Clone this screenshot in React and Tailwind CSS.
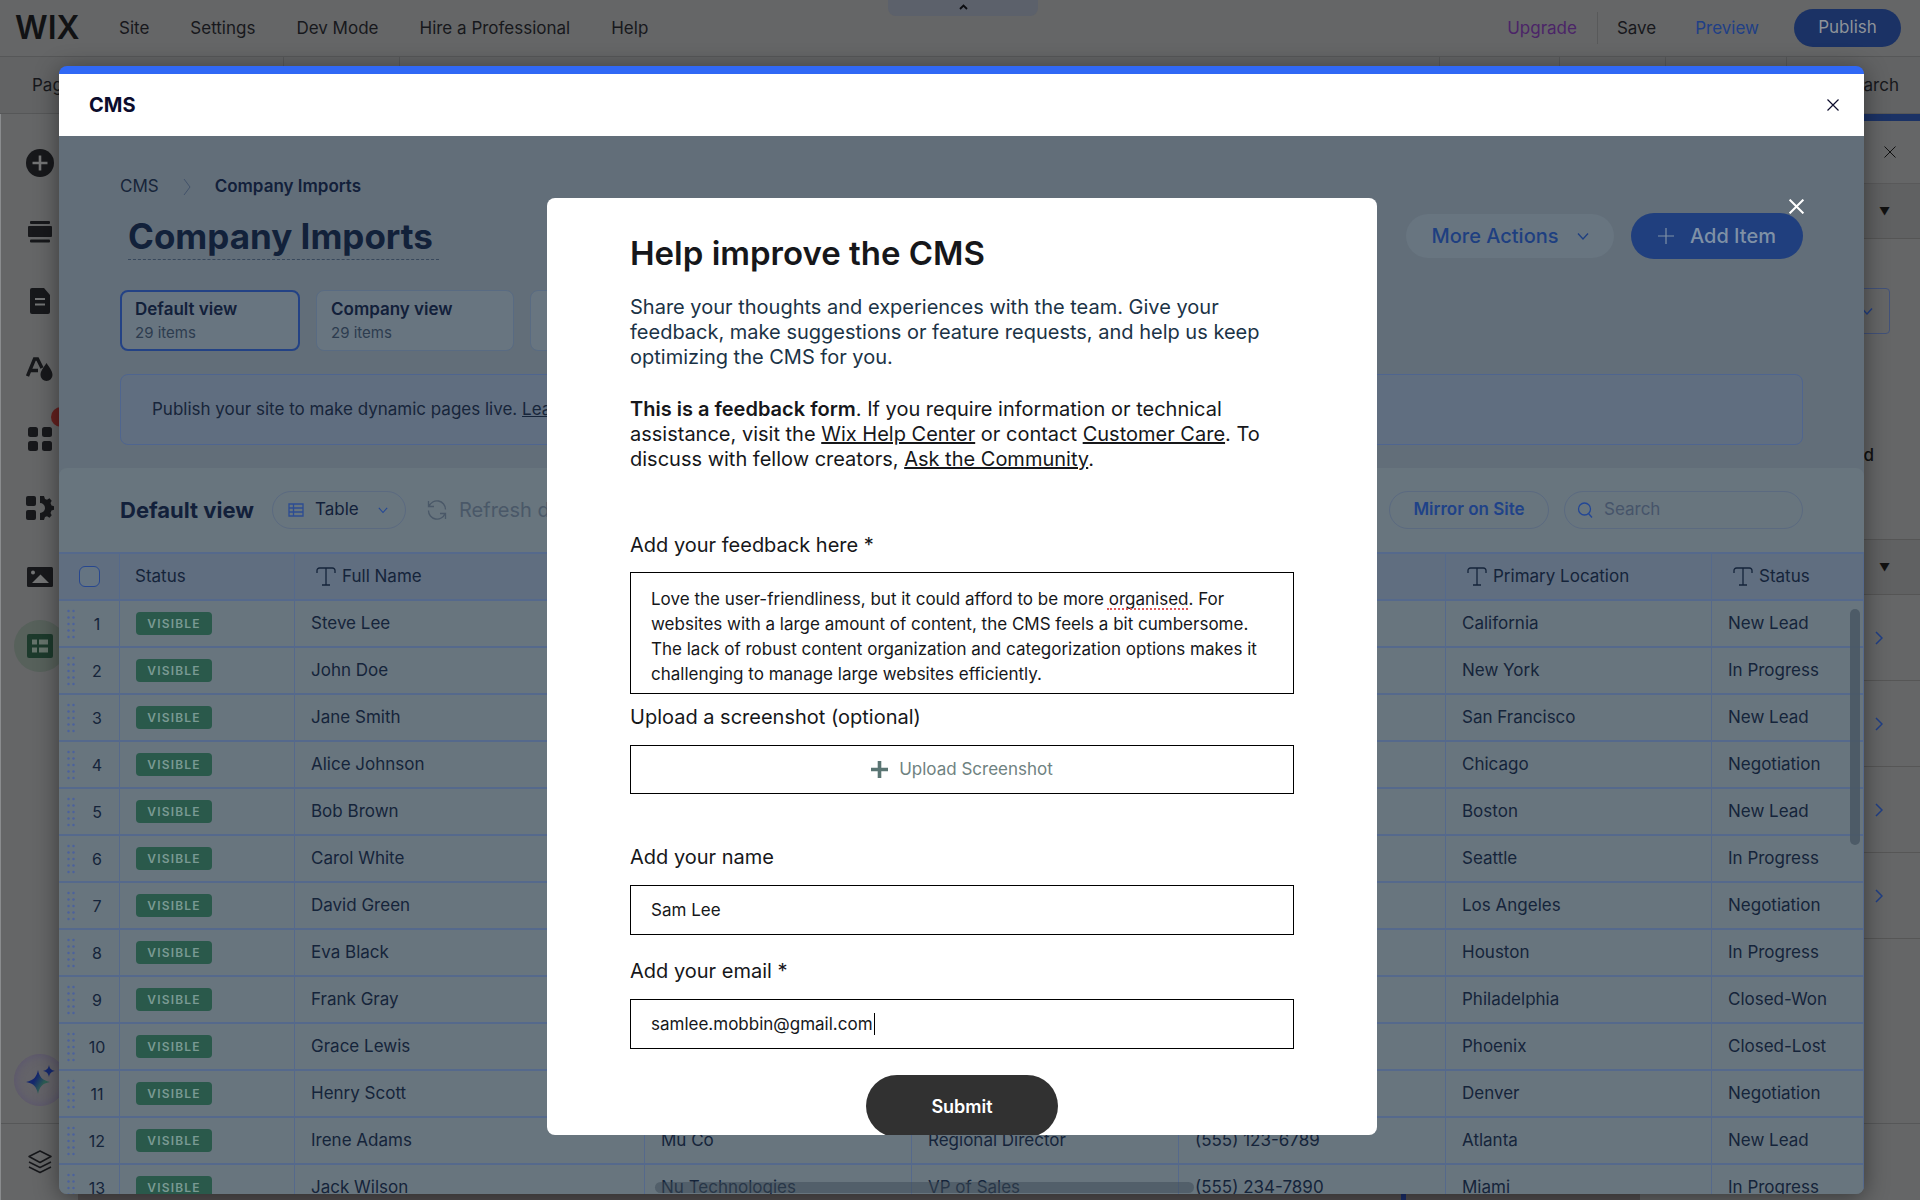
import React from 'react';

const menu = ['Site', 'Settings', 'Dev Mode', 'Hire a Professional', 'Help'];

const rows = [
  { name: 'Steve Lee', location: 'California', status: 'New Lead' },
  { name: 'John Doe', location: 'New York', status: 'In Progress' },
  { name: 'Jane Smith', location: 'San Francisco', status: 'New Lead' },
  { name: 'Alice Johnson', location: 'Chicago', status: 'Negotiation' },
  { name: 'Bob Brown', location: 'Boston', status: 'New Lead' },
  { name: 'Carol White', location: 'Seattle', status: 'In Progress' },
  { name: 'David Green', location: 'Los Angeles', status: 'Negotiation' },
  { name: 'Eva Black', location: 'Houston', status: 'In Progress' },
  { name: 'Frank Gray', location: 'Philadelphia', status: 'Closed-Won' },
  { name: 'Grace Lewis', location: 'Phoenix', status: 'Closed-Lost' },
  { name: 'Henry Scott', location: 'Denver', status: 'Negotiation' },
  { name: 'Irene Adams', company: 'Mu Co', title: 'Regional Director', phone: '(555) 123-6789', location: 'Atlanta', status: 'New Lead' },
  { name: 'Jack Wilson', company: 'Nu Technologies', title: 'VP of Sales', phone: '(555) 234-7890', location: 'Miami', status: 'In Progress' },
];

const feedback =
  'Love the user-friendliness, but it could afford to be more organised. For websites with a large amount of content, the CMS feels a bit cumbersome. The lack of robust content organization and categorization options makes it challenging to manage large websites efficiently.';

/* ---------- Icons ---------- */

function Cross({ size, width = 1.5 }) {
  return (
    <svg width={size} height={size} viewBox="0 0 12 12" fill="none" stroke="currentColor" strokeWidth={width}>
      <path d="M0.5 0.5 11.5 11.5M11.5 0.5 0.5 11.5" />
    </svg>
  );
}

function ChevronDown({ size = 12 }) {
  return (
    <svg width={size} height={size} viewBox="0 0 12 12" fill="none" stroke="currentColor" strokeWidth="1.3">
      <path d="M1 3.5 6 9l5-5.5" />
    </svg>
  );
}

function ChevronRight() {
  return (
    <svg width="8" height="14" viewBox="0 0 8 14" fill="none" stroke="currentColor" strokeWidth="1.5">
      <path d="M1 1l6 6-6 6" />
    </svg>
  );
}

function TextIcon() {
  return (
    <svg width="20" height="19" viewBox="0 0 20 19" fill="none" stroke="currentColor" strokeWidth="1.3">
      <path d="M1 6V3.5A2.5 2.5 0 0 1 3.5 1h13A2.5 2.5 0 0 1 19 3.5V6M10 1v17M6 18h8" />
    </svg>
  );
}

function DragDots() {
  return (
    <svg width="8" height="30" viewBox="0 0 8 30" fill="#4c629c">
      {[2, 8.5, 15, 21.5, 28].map((y) => (
        <g key={y}>
          <circle cx="1.5" cy={y} r="1.2" />
          <circle cx="6.5" cy={y} r="1.2" />
        </g>
      ))}
    </svg>
  );
}

const sideIcons = [
  {
    label: 'Add',
    icon: (
      <svg width="28" height="28" viewBox="0 0 28 28">
        <circle cx="14" cy="14" r="14" fill="currentColor" />
        <path d="M14 6.5v15M6.5 14h15" stroke="#737475" strokeWidth="2.6" />
      </svg>
    ),
  },
  {
    label: 'Sections',
    icon: (
      <svg width="24" height="22" viewBox="0 0 24 22" fill="currentColor">
        <rect x="2" y="0" width="20" height="3" rx="1" />
        <rect x="0" y="5" width="24" height="11" rx="1" />
        <rect x="2" y="18.5" width="20" height="3" rx="1" />
      </svg>
    ),
  },
  {
    label: 'Pages',
    icon: (
      <svg width="20" height="26" viewBox="0 0 20 26">
        <path d="M2 0h12l6 7v17a2 2 0 0 1-2 2H2a2 2 0 0 1-2-2V2a2 2 0 0 1 2-2z" fill="currentColor" />
        <path d="M5 11h10M5 16.5h10" stroke="#737475" strokeWidth="2.2" />
      </svg>
    ),
  },
  {
    label: 'Design',
    icon: (
      <svg width="28" height="26" viewBox="0 0 28 26">
        <path d="M1.5 19 8.5 2h3l4.5 9M5 13.5h7" fill="none" stroke="currentColor" strokeWidth="3.4" />
        <path d="M20.500 6c3 4.500 6 8 6 12a6 6 0 0 1-12 0c0-4 3-7.500 6-12z" fill="currentColor" />
      </svg>
    ),
  },
  {
    label: 'Apps',
    icon: (
      <svg width="24" height="24" viewBox="0 0 24 24" fill="currentColor">
        <rect x="0" y="0" width="10" height="10" rx="2.5" />
        <rect x="14" y="0" width="10" height="10" rx="2.5" />
        <rect x="0" y="14" width="10" height="10" rx="2.5" />
        <rect x="14" y="14" width="10" height="10" rx="2.5" />
      </svg>
    ),
  },
  {
    label: 'Business',
    icon: (
      <svg width="28" height="24" viewBox="0 0 28 24" fill="currentColor">
        <rect x="0" y="0" width="10" height="10" rx="2" />
        <rect x="0" y="14" width="10" height="10" rx="2" />
        <path d="M14 0h4l1 3 2 .8 2.5-1.5 2.2 2.4L24.5 7l1 2.5 2.500.7v3.600l-2.500.7-1 2.500 1.200 2.300-2.200 2.400-2.500-1.500-2 .8-1 3h-4v-7a5 5 0 0 0 0-10z" />
      </svg>
    ),
  },
  {
    label: 'Media',
    icon: (
      <svg width="26" height="20" viewBox="0 0 26 20">
        <rect width="26" height="20" rx="1.5" fill="currentColor" />
        <circle cx="6" cy="5.5" r="2" fill="#737475" />
        <path d="M5 16l8.5-8.5L22 16z" fill="#737475" />
      </svg>
    ),
  },
  {
    label: 'CMS',
    active: true,
    icon: (
      <svg width="26" height="24" viewBox="0 0 26 24">
        <rect width="26" height="24" rx="2" fill="#1d3a2c" />
        <path d="M5 5.500h5v5H5zM12 5.500h9v5h-9zM5 13.500h5v5H5zM12 13.500h9v5h-9z" fill="#66736b" />
      </svg>
    ),
  },
];

/* ---------- Editor behind the windows ---------- */

function TopBar() {
  return (
    <header className="relative flex h-[57px] items-center border-b border-[#565758] bg-[#656667] pl-[15px] pr-[19px] text-[17px] text-[#17181c]">
      <span className="w-[104px] text-[32px] font-semibold leading-none text-[#111214]">WIX</span>
      <nav className="flex flex-1 gap-[41px] pt-0.5">
        {menu.map((item) => (
          <button key={item} type="button">{item}</button>
        ))}
      </nav>
      <button type="button" className="absolute left-1/2 top-0 flex h-4 w-[150px] -translate-x-[72px] justify-center rounded-b-lg bg-[#5c616b]" aria-label="Collapse">
        <svg width="9" height="6" viewBox="0 0 9 6" className="mt-1" fill="none" stroke="#0b0c10" strokeWidth="1.8">
          <path d="M1 5l3.5-3.5L8 5" />
        </svg>
      </button>
      <button type="button" className="pt-0.5 text-[#4b2468]">Upgrade</button>
      <span className="ml-5 mr-[19px] h-8 w-px bg-[#58595a]" />
      <button type="button" className="pt-0.5">Save</button>
      <button type="button" className="ml-[39px] pt-0.5 text-[#203f86]">Preview</button>
      <button type="button" className="ml-[35px] h-[38px] w-[107px] rounded-full bg-[#1b3265] text-[#8e9399]">Publish</button>
    </header>
  );
}

function SubBar() {
  return (
    <div className="flex h-[57px] items-center border-b border-[#565758] bg-[#626364] text-[17px] text-[#17181c] [&>div]:flex [&>div]:h-full [&>div]:items-center [&>div]:border-r [&>div]:border-[#565758]">
      <div className="w-[284px] pl-8 pt-0.5">Page</div>
      <div className="w-[116px]" />
      <div className="flex-1" />
      <div className="w-[120px]" />
      <div className="w-[106px]" />
      <div className="w-[121px]" />
      <button type="button" className="w-[133px] pr-[21px] pt-0.5 text-right">Search</button>
    </div>
  );
}

function LeftRail() {
  return (
    <aside className="flex w-[78px] flex-col border-l border-[#8a8c8e] bg-[#656667] text-[#17181b]">
      <div className="flex-1 pt-3.5">
        {sideIcons.map(({ label, icon, active }) => (
          <div key={label} className="relative flex h-[69px] items-center justify-center">
            {label === 'Apps' && (
              <span className="absolute left-[50px] top-[3px] h-5 w-5 rounded-full bg-[#66211f]" />
            )}
            <button
              type="button"
              aria-label={label}
              className={active ? 'flex h-[52px] w-[52px] items-center justify-center rounded-full bg-[#57615b]' : 'flex items-center'}
            >
              {icon}
            </button>
          </div>
        ))}
      </div>
      <button
        type="button"
        aria-label="AI assistant"
        className="mb-[17px] flex h-[52px] w-[52px] items-center justify-center self-center rounded-full border border-[#5f5a6c] bg-[#646369] shadow-[inset_0_0_8px_#5b5570]"
      >
        <svg width="30" height="30" viewBox="0 0 30 30">
          <defs>
            <linearGradient id="spark" x1="0" y1="0" x2="1" y2="0.6">
              <stop offset="0.45" stopColor="#15286e" />
              <stop offset="0.8" stopColor="#2f6055" />
            </linearGradient>
          </defs>
          <path d="M13 5c1.5 7 4 10 12 12-8 1.5-10.5 5-12 12-1.5-7-4-10.5-12-12 8-2 10.5-5 12-12z" fill="url(#spark)" />
          <path d="M24 0c.7 3.5 2 5 6 6-4 .8-5.3 2.5-6 6-.7-3.5-2-5.2-6-6 4-1 5.3-2.5 6-6z" fill="#15286e" />
        </svg>
      </button>
      <div className="flex h-[77px] items-center justify-center border-t border-[#565758]">
        <button type="button" aria-label="Layers">
          <svg width="24" height="24" viewBox="0 0 24 24" fill="none" stroke="currentColor" strokeWidth="1.5" strokeLinejoin="round">
            <path d="M12 1l11 5.5-11 6L1 6.5zM1 12l11 5.5L23 12M1 17l11 5.5L23 17" />
          </svg>
        </button>
      </div>
    </aside>
  );
}

function RightPanel() {
  return (
    <aside className="flex w-[280px] flex-col border-t-[7px] border-[#1b3265] bg-[#656667] text-[#111]">
      <div className="flex h-[63px] items-center justify-end border-b border-[#59595a] pr-6">
        <button type="button" aria-label="Close panel"><Cross size={12} width={1} /></button>
      </div>
      <div className="flex h-[55px] items-center justify-end border-b border-[#555] bg-[#606162] pr-[30px] text-[11px]">▼</div>
      <div className="flex h-[301px] flex-col items-end justify-between border-b border-[#555] pt-[49px]">
        <button type="button" aria-label="Options" className="mr-[30px] flex h-[46px] w-[220px] items-center justify-end rounded border border-[#42527a] pr-4 text-[#203f86]">
          <ChevronDown />
        </button>
        <span className="mb-[70px] mr-[46px] text-[17px] font-medium leading-7">d</span>
      </div>
      <div className="flex h-[55px] items-center justify-end border-b border-[#555] bg-[#606162] pr-[30px] text-[11px]">▼</div>
      {[0, 1, 2, 3].map((n) => (
        <button key={n} type="button" aria-label="Open section" className="flex h-[86px] items-center justify-end border-b border-[#565656] pr-[37px] text-[#203f86]">
          <ChevronRight />
        </button>
      ))}
      <div className="flex-1" />
      <div className="h-[77px] border-t border-[#565758]" />
    </aside>
  );
}

/* ---------- CMS window ---------- */

function CmsHeading() {
  return (
    <div className="px-[61px] pt-[39px]">
      <nav className="flex h-6 items-center text-[17px] text-[#17253a]">
        <a href="#cms">CMS</a>
        <svg width="8" height="18" viewBox="0 0 8 18" className="mx-6" fill="none" stroke="#42526a">
          <path d="M1 1l6 8-6 8" />
        </svg>
        <span className="font-semibold text-[#12203a]">Company Imports</span>
      </nav>
      <div className="mt-3.5 flex items-start">
        <h1 className="ml-2 h-[47px] border-b border-dashed border-[#38485c] pr-1.5 text-[35px] font-bold leading-[46px] text-[#12213a]">
          Company Imports
        </h1>
        <button type="button" className="ml-auto mt-px flex h-11 w-[208px] items-center justify-center gap-[18px] rounded-full bg-[#687580] text-[20px] font-medium text-[#1e3f80]">
          More Actions
          <ChevronDown />
        </button>
        <button type="button" className="ml-[17px] flex h-[46px] w-[172px] items-center justify-center gap-4 rounded-full bg-[#203f7e] text-[20px] font-medium text-[#7f91a6]">
          <svg width="16" height="16" viewBox="0 0 16 16" stroke="currentColor" strokeWidth="1.2">
            <path d="M8 0v16M0 8h16" />
          </svg>
          Add Item
        </button>
      </div>
      <div className="mt-[30px] flex gap-4">
        <button type="button" className="h-[61px] w-[180px] rounded-lg border-2 border-[#234285] bg-[#687580] px-[13px] text-left">
          <span className="block text-[17px] font-semibold leading-6 text-[#12203a]">Default view</span>
          <span className="block text-[15px] leading-6 text-[#2d3c4f]">29 items</span>
        </button>
        <button type="button" className="h-[61px] w-[198px] rounded-lg border border-[#596b82] bg-[#687580] px-[14px] text-left">
          <span className="block text-[17px] font-semibold leading-6 text-[#12203a]">Company view</span>
          <span className="block text-[15px] leading-6 text-[#2d3c4f]">29 items</span>
        </button>
        <div className="h-[61px] w-[198px] rounded-lg border border-[#596b82] bg-[#687580]" />
      </div>
      <div className="mt-[23px] flex h-[71px] items-center rounded-lg border border-[#4f658f] bg-[#606e80] px-[31px] text-[17px] text-[#17253a]">
        <p>Publish your site to make dynamic pages live. <a href="#learn" className="underline">Learn more</a></p>
      </div>
    </div>
  );
}

function Toolbar() {
  return (
    <div className="flex h-[84px] items-center px-[61px]">
      <h2 className="text-[22px] font-bold text-[#12203a]">Default view</h2>
      <button type="button" className="ml-[18px] flex h-[38px] w-[134px] items-center rounded-full border border-[#5b6a80] pl-[15px] text-[17px] text-[#12203a]">
        <svg width="16" height="14" viewBox="0 0 16 14" fill="none" stroke="#2c4c93" strokeWidth="1.3">
          <path d="M1 1h14v12H1zM1 5h14M1 9h14M5.500 1v12" />
        </svg>
        <span className="ml-[11px] mr-[19px]">Table</span>
        <span className="text-[#234796]"><ChevronDown size={10} /></span>
      </button>
      <button type="button" className="ml-[21px] flex items-center gap-3 whitespace-nowrap text-[20px] text-[#4a5868]">
        <svg width="20" height="20" viewBox="0 0 20 20" fill="none" stroke="currentColor" strokeWidth="1.3">
          <path d="M1.5 1v5.500H7M2 6.500a8.500 8.500 0 0 1 16.500 3M18.500 19v-5.500H13M18 13.500a8.500 8.500 0 0 1-16.500-3" />
        </svg>
        Refresh data
      </button>
      <button type="button" className="ml-auto h-[38px] w-[160px] rounded-full border border-[#5b6a80] text-[17px] font-semibold text-[#1f4288]">Mirror on Site</button>
      <label className="ml-[15px] flex h-[38px] w-[239px] items-center rounded-full border border-[#5b6a80] pl-3 text-[#234796]">
        <svg width="16" height="16" viewBox="0 0 16 16" fill="none" stroke="currentColor" strokeWidth="1.3">
          <circle cx="7.5" cy="7" r="6" />
          <path d="M11.5 11.5 15 15.5" />
        </svg>
        <input type="search" placeholder="Search" aria-label="Search" className="ml-[11px] min-w-0 flex-1 bg-transparent text-[17px] outline-none placeholder:text-[#46546a]" />
      </label>
    </div>
  );
}

const headCell = 'border-b-2 border-r border-t-2 border-[#55698c] bg-[#606e80] text-left font-normal';
const cell = 'h-[47px] overflow-hidden whitespace-nowrap border-b-2 border-r border-[#55698c] px-4 py-0';

function ItemsTable() {
  return (
    <table className="w-full table-fixed border-separate border-spacing-0 text-[17px] text-[#15243a]">
      <colgroup>
        <col className="w-[61px]" />
        <col className="w-[175px]" />
        <col className="w-[350px]" />
        <col className="w-[267px]" />
        <col className="w-[267px]" />
        <col className="w-[267px]" />
        <col className="w-[266px]" />
        <col />
      </colgroup>
      <thead>
        <tr className="h-[49px]">
          <th className={headCell}>
            <input type="checkbox" aria-label="Select all items" className="ml-5 block h-[21px] w-[21px] appearance-none rounded-md border border-[#27478f] bg-[#657482]" />
          </th>
          <th className={headCell}><span className="pl-[15px]">Status</span></th>
          {['Full Name', '', '', '', 'Primary Location', 'Status'].map((label, i) => (
            <th key={i} className={headCell}>
              {label && (
                <span className="flex items-center gap-1.5 pl-[21px]">
                  <TextIcon />
                  {label}
                </span>
              )}
            </th>
          ))}
        </tr>
      </thead>
      <tbody>
        {rows.map((row, i) => (
          <tr key={row.name}>
            <td className="h-[47px] border-b-2 border-r border-[#55698c] py-0 pl-2 pr-0">
              <div className="flex items-center">
                <DragDots />
                <span className="flex-1 text-center text-[16px]">{i + 1}</span>
              </div>
            </td>
            <td className={cell}>
              <span className="flex h-[23px] w-[76px] items-center justify-center rounded-sm bg-[#2a594b] text-[12px] font-semibold tracking-widest text-[#7a9a93]">
                VISIBLE
              </span>
            </td>
            <td className={cell}>{row.name}</td>
            <td className={cell}>{row.company}</td>
            <td className={cell}>{row.title}</td>
            <td className={cell}>{row.phone}</td>
            <td className={cell}>{row.location}</td>
            <td className={cell}>{row.status}</td>
          </tr>
        ))}
      </tbody>
    </table>
  );
}

function CmsWindow() {
  return (
    <section className="absolute bottom-[6px] left-[59px] right-[56px] top-[66px] flex flex-col overflow-hidden rounded-lg border-t-8 border-[#3068f5] bg-[#626e79] shadow-[0_4px_24px_rgba(0,0,0,0.45)]">
      <div className="flex h-[62px] shrink-0 items-center justify-between bg-white pl-[30px] pr-[25px] text-[#0c0c2c]">
        <h2 className="text-[20px] font-bold">CMS</h2>
        <button type="button" aria-label="Close CMS"><Cross size={12} width={1.2} /></button>
      </div>
      <CmsHeading />
      <div className="relative mt-[23px] min-h-0 flex-1 overflow-hidden rounded-t-lg bg-[#68757e]">
        <Toolbar />
        <ItemsTable />
        <span className="absolute right-1 top-[141px] h-[236px] w-[10px] rounded-full bg-[#4a5965]/90" />
        <span className="absolute bottom-px left-[596px] h-[11px] w-[539px] rounded-full bg-[#3c4a55]/50" />
      </div>
    </section>
  );
}

/* ---------- Feedback form ---------- */

const labelStyle = 'block text-[20px] leading-[30px] text-[#16171a]';

function FeedbackModal() {
  return (
    <div role="dialog" aria-labelledby="feedback-title" className="absolute bottom-[65px] left-1/2 top-[198px] w-[830px] -translate-x-[413px] overflow-hidden rounded-lg bg-white px-[83px] pt-[35px] text-[#16171a]">
      <h2 id="feedback-title" className="text-[33px] font-semibold leading-10">Help improve the CMS</h2>
      <p className="mt-[22px] text-[20px] leading-[25px] text-[#1b3346]">
        Share your thoughts and experiences with the team. Give your feedback, make suggestions or feature requests, and help us keep optimizing the CMS for you.
      </p>
      <p className="mt-[27px] text-[20px] leading-[25px]">
        <strong className="font-semibold">This is a feedback form</strong>. If you require information or technical assistance, visit the{' '}
        <a href="#help" className="underline">Wix Help Center</a> or contact{' '}
        <a href="#care" className="underline">Customer Care</a>. To discuss with fellow creators,{' '}
        <a href="#community" className="underline">Ask the Community</a>.
      </p>

      <form onSubmit={(e) => e.preventDefault()}>
        <label htmlFor="feedback" className={`${labelStyle} mt-[58px]`}>Add your feedback here *</label>
        <div className="relative mt-3">
          <textarea
            id="feedback"
            defaultValue={feedback}
            spellCheck={false}
            className="block h-[122px] w-full resize-none overflow-hidden border border-black py-[14px] pl-5 pr-4 text-[17px] leading-[25px] outline-none"
          />
          {/* spelling mark */}
          <span className="absolute left-[477px] top-[36px] w-[81px] border-b-2 border-dotted border-[#e0575b]" />
        </div>

        <label htmlFor="screenshot" className={`${labelStyle} mt-2`}>Upload a screenshot (optional)</label>
        <button id="screenshot" type="button" className="mt-[13px] flex h-[49px] w-full items-center justify-center gap-[11px] border border-black text-[17px] text-[#6f8281]">
          <svg width="17" height="17" viewBox="0 0 17 17" stroke="#5a7573" strokeWidth="3.6">
            <path d="M8.5 0v17M0 8.5h17" />
          </svg>
          Upload Screenshot
        </button>

        <label htmlFor="name" className={`${labelStyle} mt-12`}>Add your name</label>
        <input id="name" type="text" defaultValue="Sam Lee" className="mt-[13px] block h-[50px] w-full border border-black px-5 text-[17px] outline-none" />

        <label htmlFor="email" className={`${labelStyle} mt-[21px]`}>Add your email *</label>
        <div className="relative mt-[13px]">
          <input id="email" type="text" defaultValue="samlee.mobbin@gmail.com" className="block h-[50px] w-full border border-black px-5 text-[17px] outline-none" />
          {/* text cursor */}
          <span className="absolute left-[244px] top-[14px] h-[22px] w-px bg-black" />
        </div>

        <button type="submit" className="mx-auto mt-[26px] block h-[62px] w-[192px] rounded-full bg-[#313131] text-[18px] font-semibold text-white">Submit</button>
      </form>
    </div>
  );
}

export default function App() {
  return (
    <div className="relative flex h-screen flex-col overflow-hidden bg-[#656667] font-['Inter',sans-serif]">
      <TopBar />
      <SubBar />
      <main className="flex min-h-0 flex-1 bg-[#545051]">
        <LeftRail />
        <div className="flex flex-1 items-end justify-end pr-[234px]">
          <span className="h-2 w-[5px] bg-[#1b2f6e]" />
        </div>
        <RightPanel />
      </main>
      <CmsWindow />
      <button type="button" aria-label="Close feedback" className="absolute right-[116px] top-[199px] text-white">
        <Cross size={15} width={1.6} />
      </button>
      <FeedbackModal />
    </div>
  );
}
